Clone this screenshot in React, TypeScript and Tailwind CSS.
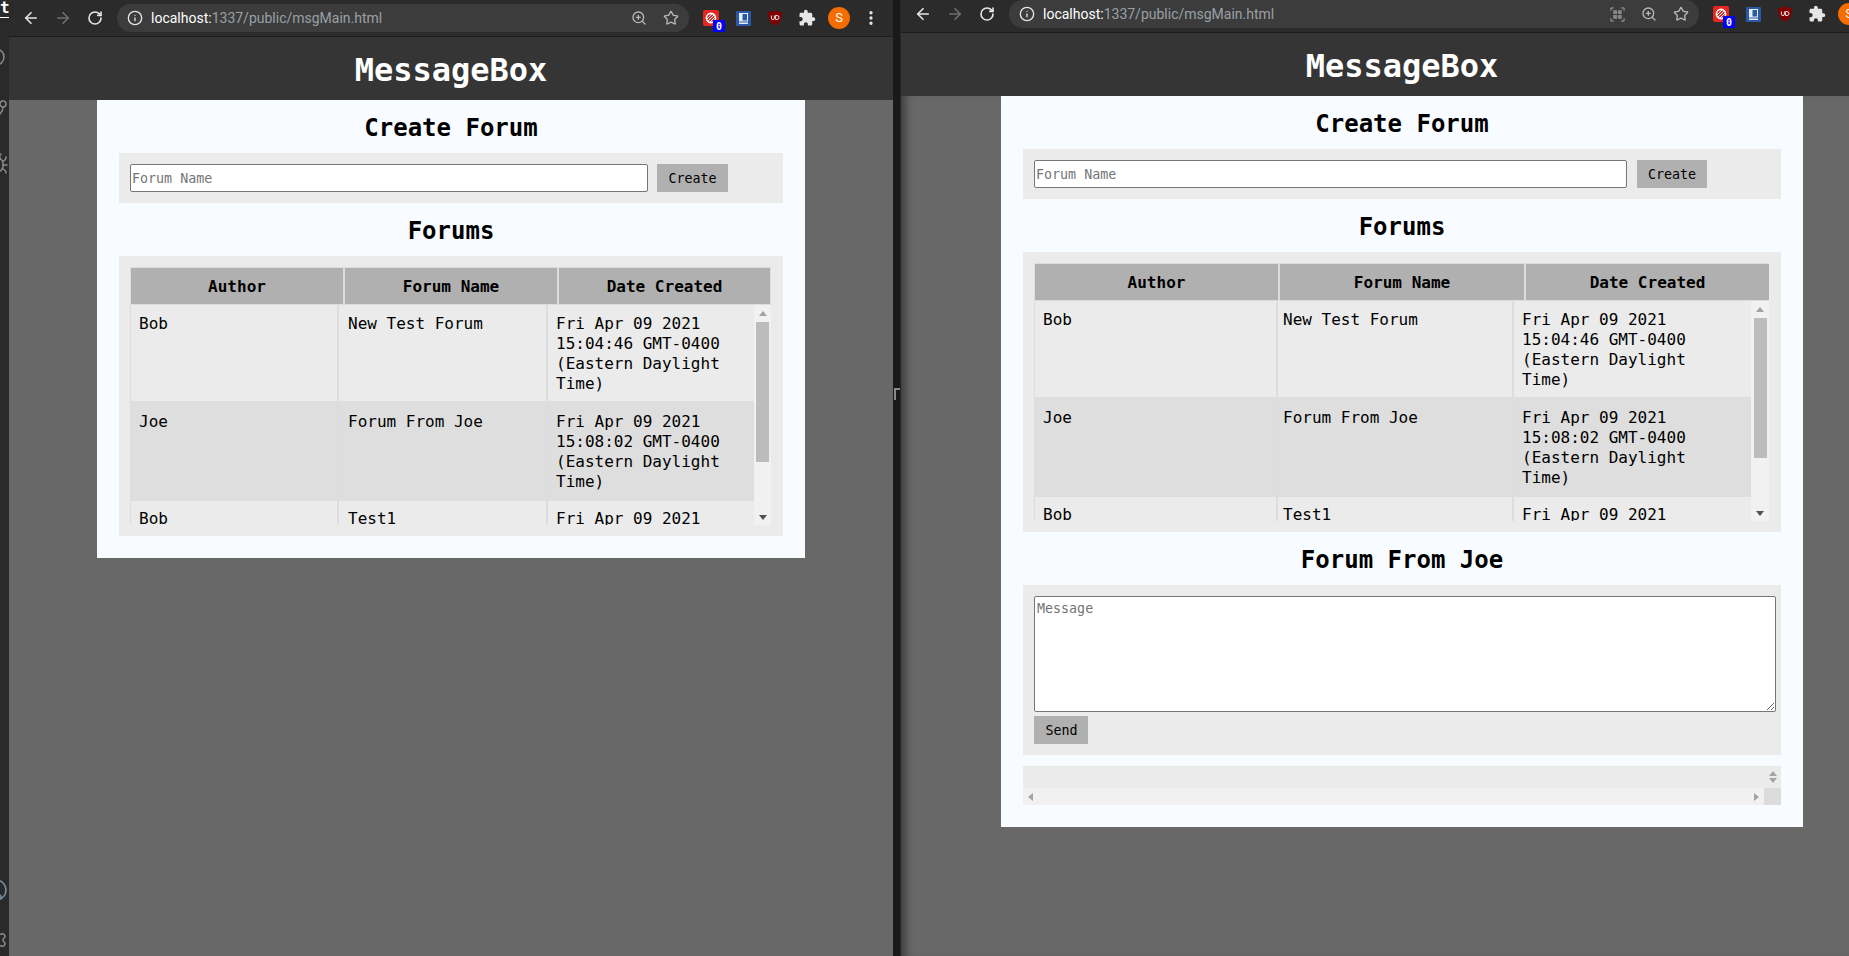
import type { ReactNode } from "react";
import {
  ArrowLeft,
  ArrowRight,
  Bug,
  CircleUser,
  EllipsisVertical,
  GitBranch,
  Info,
  RotateCw,
  Search,
  Settings,
  Star,
  ZoomIn,
} from "lucide-react";
import { MdExtension } from "react-icons/md";

const forums = [
  {
    author: "Bob",
    name: "New Test Forum",
    date: ["Fri Apr 09 2021", "15:04:46 GMT-0400", "(Eastern Daylight", "Time)"],
    row: "bg-[#ebebeb]",
    pad: "pt-[9px] pb-[7px]",
  },
  {
    author: "Joe",
    name: "Forum From Joe",
    date: ["Fri Apr 09 2021", "15:08:02 GMT-0400", "(Eastern Daylight", "Time)"],
    row: "bg-[#dedede]",
    pad: "pt-[11px] pb-[9px]",
  },
  {
    author: "Bob",
    name: "Test1",
    date: ["Fri Apr 09 2021"],
    row: "bg-[#ebebeb]",
    pad: "pt-[8px] pb-[6px]",
  },
];

function Triangle({ dir, className }: { dir: "up" | "down" | "left" | "right"; className: string }) {
  const points = {
    up: "4,1 8,6 0,6",
    down: "0,2 8,2 4,7",
    left: "6,0 6,8 1,4",
    right: "2,0 7,4 2,8",
  }[dir];
  return (
    <svg width="8" height="8" viewBox="0 0 8 8" className={className}>
      <polygon points={points} fill="currentColor" />
    </svg>
  );
}

function ToolbarIcon({ children }: { children: ReactNode }) {
  return <div className="flex h-7 w-8 items-center justify-center">{children}</div>;
}

function Extensions() {
  return (
    <div className="ml-[6px] flex h-7 shrink-0 items-center">
      <ToolbarIcon>
        <div className="relative h-4 w-4 rounded-[2px] bg-[#e5281f]">
          <svg viewBox="0 0 16 16" className="h-4 w-4" fill="none" stroke="white">
            <circle cx="8" cy="8" r="4.6" strokeWidth="1.6" />
            <path d="M4 12 12 4M6 13 13 6M3 10 10 3" strokeWidth="1" />
          </svg>
          <span className="absolute left-[10px] top-[10px] flex h-3 w-3 items-center justify-center rounded-[1px] bg-[#0000ff] font-['DejaVu_Sans_Mono',monospace] text-[10px] font-bold text-white">
            0
          </span>
        </div>
      </ToolbarIcon>
      <ToolbarIcon>
        <div className="h-[15px] w-[15px] rounded-[1px] bg-[#2a5aa7] p-[2px]">
          <svg viewBox="0 0 11 11" className="h-[11px] w-[11px]">
            <path d="M1 0h9v11H1z" fill="#e8eef8" />
            <path d="M3 0.5v8M4.5 1h4.5v6.5H4.5z" fill="#2a5aa7" />
            <path d="M1 9h9" stroke="#2a5aa7" />
          </svg>
        </div>
      </ToolbarIcon>
      <ToolbarIcon>
        <svg viewBox="0 0 16 16" className="h-4 w-4">
          <path d="M8 0.5 15 2.5C15 9 13 13 8 15.5 3 13 1 9 1 2.5Z" fill="#800000" />
          <path d="M4.4 5.5v2.6a1.5 1.5 0 0 0 3 0V5.5M8.6 5.5v4h1.4a2 2 0 0 0 0-4Z" fill="none" stroke="#e8e0e0" strokeWidth="1" />
        </svg>
      </ToolbarIcon>
      <ToolbarIcon>
        <MdExtension className="h-[18px] w-[18px] text-[#e6e6e6]" />
      </ToolbarIcon>
      <ToolbarIcon>
        <div className="flex h-[22px] w-[22px] items-center justify-center rounded-full bg-[#f56c00] font-['Roboto',sans-serif] text-[13px] text-white">
          S
        </div>
      </ToolbarIcon>
      <ToolbarIcon>
        <EllipsisVertical className="h-[18px] w-[18px] text-[#e6e6e6]" strokeWidth={2.4} />
      </ToolbarIcon>
    </div>
  );
}

function Toolbar({ topPad, grid }: { topPad: string; grid?: boolean }) {
  return (
    <div className={`flex h-fit shrink-0 border-b border-[#1c1c1c] bg-[#2b2b2b] pb-[4px] pl-[6px] ${topPad}`}>
      <ToolbarIcon>
        <ArrowLeft className="h-[18px] w-[18px] text-[#e6e6e6]" strokeWidth={2.2} />
      </ToolbarIcon>
      <ToolbarIcon>
        <ArrowRight className="h-[18px] w-[18px] text-[#6f6f6f]" strokeWidth={2.2} />
      </ToolbarIcon>
      <ToolbarIcon>
        <RotateCw className="h-[16px] w-[16px] text-[#e6e6e6]" strokeWidth={2.4} />
      </ToolbarIcon>
      <div className={`ml-[6px] flex h-7 shrink-0 items-center rounded-full bg-[#3c3c3c] pl-[10px] pr-[2px] ${grid ? "w-[690px]" : "w-[572px]"}`}>
        <Info className="h-4 w-4 text-[#e6e6e6]" strokeWidth={2} />
        <span className="ml-[8px] flex-1 font-['Roboto',sans-serif] text-[14px] text-[#9aa0a6]">
          <span className="text-white">localhost:</span>1337/public/msgMain.html
        </span>
        {grid && (
          <ToolbarIcon>
            <svg viewBox="0 0 16 16" className="h-[15px] w-[15px]" fill="none" stroke="#aaaaaa">
              <path d="M1 4V1h3M12 1h3v3M15 12v3h-3M4 15H1v-3" />
              <path d="M3.5 3.5h4v4h-4zM8.5 3.5h4v4h-4zM3.5 8.5h4v4h-4zM8.5 8.5h4v4h-4z" fill="#8a8a8a" stroke="none" />
            </svg>
          </ToolbarIcon>
        )}
        <ToolbarIcon>
          <ZoomIn className="h-[16px] w-[16px] text-[#b8b8b8]" />
        </ToolbarIcon>
        <ToolbarIcon>
          <Star className="h-[16px] w-[16px] text-[#b8b8b8]" strokeWidth={2} />
        </ToolbarIcon>
      </div>
      <Extensions />
    </div>
  );
}

function SectionTitle({ children }: { children: ReactNode }) {
  return (
    <div className="flex h-[53px] items-center justify-center pt-[2px] text-[24px] font-bold leading-none text-black">
      {children}
    </div>
  );
}

function CreateForum({ inputWidth, gap, buttonWidth }: { inputWidth: string; gap: string; buttonWidth: string }) {
  return (
    <div className={`flex bg-[#ebebeb] p-[11px] ${gap}`}>
      <input
        placeholder="Forum Name"
        className={`h-7 rounded-[2px] border border-[#767676] bg-white pl-[1px] pt-[1px] text-[13.33px] text-black outline-none placeholder:text-[#757575] ${inputWidth}`}
      />
      <button type="button" className={`h-7 bg-[#b0b0b0] pt-[1px] text-[13.33px] text-black ${buttonWidth}`}>
        Create
      </button>
    </div>
  );
}

function ForumTable({
  headCols,
  bodyCols,
  nameCell,
  trackWidth,
}: {
  headCols: string;
  bodyCols: string;
  nameCell: string;
  trackWidth: string;
}) {
  return (
    <div className="bg-[#ebebeb] p-[11px] pr-[12px] text-[16px] leading-[20px] text-black">
      <div className={`grid gap-x-[2px] bg-[#dddddd] py-[1px] pl-[1px] pr-[1px] ${headCols}`}>
        {["Author", "Forum Name", "Date Created"].map((label) => (
          <div key={label} className="flex h-9 items-center justify-center bg-[#b0b0b0] pt-[2px] font-bold">
            {label}
          </div>
        ))}
      </div>
      <div className="flex h-[220px] overflow-hidden border-l border-[#dddddd]">
        <div className="min-w-0 flex-1">
          {forums.map((forum, i) => (
            <div key={i} className={`grid gap-x-[2px] bg-[#dddddd] ${bodyCols}`}>
              <div className={`pl-[8px] ${forum.row} ${forum.pad}`}>{forum.author}</div>
              <div className={`${nameCell} ${forum.row} ${forum.pad}`}>{forum.name}</div>
              <div className={`pl-[8px] ${forum.row} ${forum.pad}`}>
                {forum.date.map((line) => (
                  <div key={line} className="whitespace-nowrap">
                    {line}
                  </div>
                ))}
              </div>
            </div>
          ))}
        </div>
        <div className={`flex shrink-0 flex-col items-center justify-between bg-[#f1f1f1] ${trackWidth}`}>
          <div className="flex w-full flex-col items-center">
            <div className="flex h-[17px] items-center justify-center">
              <Triangle dir="up" className="text-[#a3a3a3]" />
            </div>
            <div className="h-[140px] w-[13px] bg-[#bcbcbc]" />
          </div>
          <div className="flex h-[17px] items-center justify-center">
            <Triangle dir="down" className="text-[#505050]" />
          </div>
        </div>
      </div>
    </div>
  );
}

function MessageBoxHeader() {
  return (
    <div className="flex h-[63px] shrink-0 items-center justify-center bg-[#353535] pt-[2px] text-[32px] font-bold leading-none text-white">
      MessageBox
    </div>
  );
}

function MessageForm() {
  return (
    <>
      <SectionTitle>Forum From Joe</SectionTitle>
      <div className="flex flex-col items-start gap-y-[4px] bg-[#ebebeb] p-[11px]">
        <textarea
          placeholder="Message"
          className="h-[116px] w-[742px] rounded-[2px] border border-[#767676] bg-white pl-[2px] pt-[2px] text-[13.33px] text-black outline-none placeholder:text-[#757575]"
        />
        <button type="button" className="h-7 w-[54px] bg-[#b0b0b0] pl-[1px] pt-[1px] text-[13.33px] text-black">
          Send
        </button>
      </div>
      <div className="mt-[11px] flex h-[39px]">
        <div className="flex min-w-0 flex-1 flex-col">
          <div className="h-[22px] bg-[#ebebeb]" />
          <div className="flex h-[17px] items-center justify-between bg-[#f1f1f1] px-[4px]">
            <Triangle dir="left" className="text-[#a3a3a3]" />
            <Triangle dir="right" className="text-[#a3a3a3]" />
          </div>
        </div>
        <div className="flex w-[17px] flex-col">
          <div className="flex h-[22px] flex-col items-center justify-center bg-[#ebebeb]">
            <Triangle dir="up" className="-mb-[1px] text-[#a3a3a3]" />
            <Triangle dir="down" className="-mt-[1px] text-[#a3a3a3]" />
          </div>
          <div className="h-[17px] bg-[#dcdcdc]" />
        </div>
      </div>
    </>
  );
}

function EditorStrip() {
  return (
    <div className="flex w-[9px] shrink-0 flex-col overflow-hidden bg-[#2a2a2a] text-[#8a8a8a]">
      <div className="h-[18px] w-[9px] border-b border-white text-[16px] font-bold leading-[16px] text-white">t</div>
      <Search className="-ml-[17px] mt-[28px] h-6 w-6 shrink-0 -scale-x-100" strokeWidth={1.5} />
      <GitBranch className="-ml-[15px] mt-[28px] h-6 w-6 shrink-0" strokeWidth={1.5} />
      <Bug className="-ml-[15px] mt-[30px] h-6 w-6 shrink-0" strokeWidth={1.5} />
      <div className="flex-1" />
      <CircleUser className="-ml-[16px] h-6 w-6 shrink-0 text-[#78909c]" strokeWidth={1.5} />
      <Settings className="-ml-[16px] mb-[4px] mt-[26px] h-6 w-6 shrink-0" strokeWidth={1.5} />
    </div>
  );
}

function WindowGap() {
  return (
    <div className="flex w-[8px] shrink-0 flex-col border-r border-[#22272b] bg-[#191919]">
      <div className="ml-[1px] mt-[388px] h-[12px] w-[6px] border-l-2 border-t-2 border-[#8a8a8a]" />
    </div>
  );
}

export default function App() {
  return (
    <div className="flex h-[956px] w-[1849px] overflow-hidden bg-[#191919] font-['DejaVu_Sans_Mono',monospace]">
      <EditorStrip />

      <div className="flex h-full w-[884px] shrink-0 flex-col">
        <Toolbar topPad="pt-[4px]" />
        <MessageBoxHeader />
        <div className="flex flex-1 flex-col items-center bg-[#686868]">
          <div className="w-[708px] bg-[#f8fbff] px-[22px] pb-[22px]">
            <SectionTitle>Create Forum</SectionTitle>
            <CreateForum inputWidth="w-[518px]" gap="gap-x-[9px]" buttonWidth="w-[71px]" />
            <SectionTitle>Forums</SectionTitle>
            <ForumTable
              headCols="grid-cols-[212px_212px_211px]"
              bodyCols="grid-cols-[206px_207px_206px]"
              nameCell="pl-[9px]"
              trackWidth="w-[17px]"
            />
          </div>
        </div>
      </div>

      <WindowGap />

      <div className="flex h-full w-[1002px] shrink-0 flex-col">
        <Toolbar topPad="pt-0" grid />
        <MessageBoxHeader />
        <div className="flex flex-1 flex-col items-center bg-[#686868] shadow-[inset_10px_0_8px_-6px_rgba(0,0,0,0.45)]">
          <div className="w-[802px] bg-[#f8fbff] px-[22px] pb-[22px]">
            <SectionTitle>Create Forum</SectionTitle>
            <CreateForum inputWidth="w-[593px]" gap="gap-x-[10px]" buttonWidth="w-[70px]" />
            <SectionTitle>Forums</SectionTitle>
            <ForumTable
              headCols="grid-cols-[243px_244px_243px]"
              bodyCols="grid-cols-[241px_234px_238px]"
              nameCell="pl-[5px]"
              trackWidth="w-[18px]"
            />
            <MessageForm />
          </div>
        </div>
      </div>
    </div>
  );
}
